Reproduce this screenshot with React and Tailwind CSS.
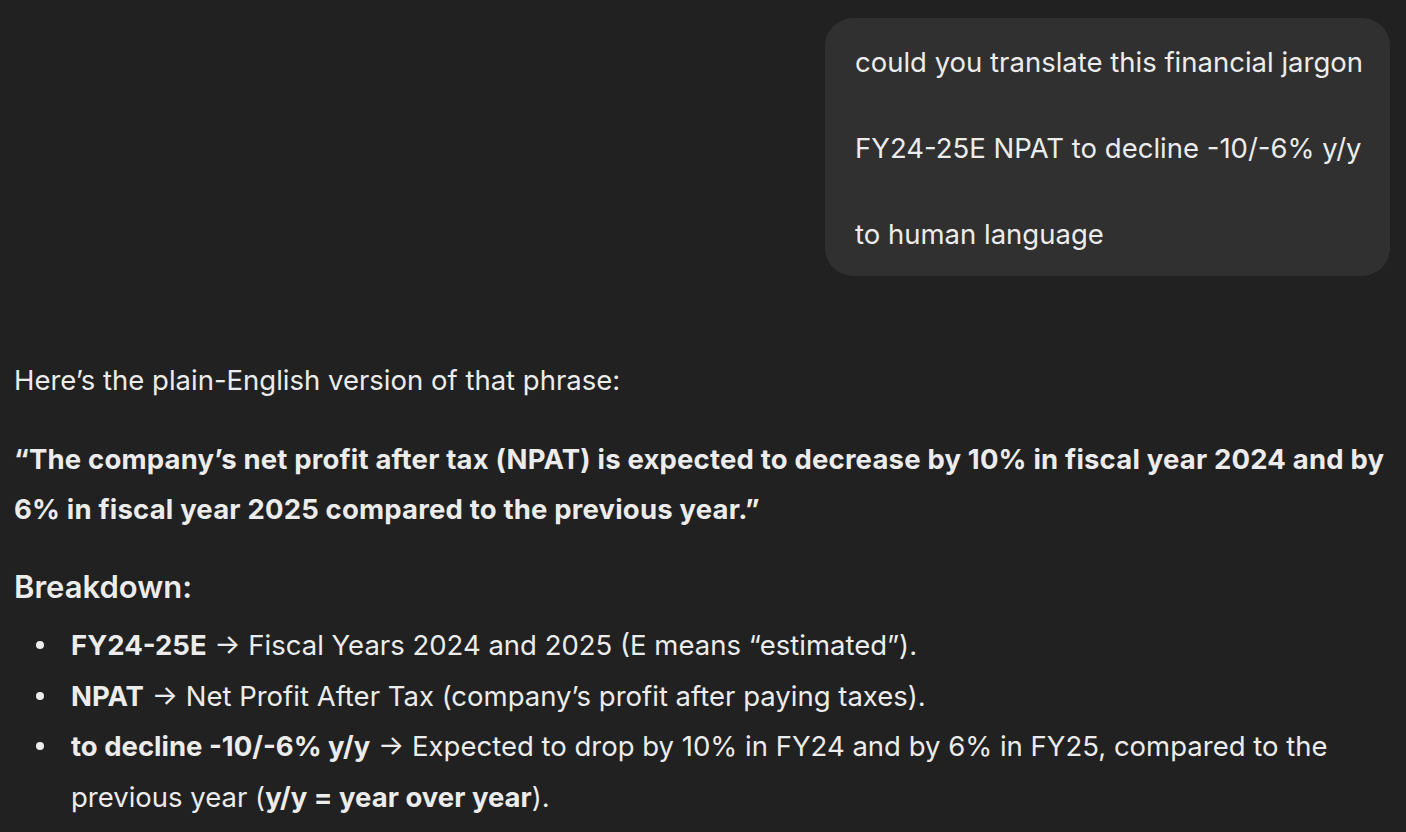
import React from "react";

function Bullet({ children }) {
  return (
    <div className="flex">
      <div className="w-[57px] shrink-0 flex h-[50.5px] items-center">
        <span className="ml-[22px] w-[8px] h-[8px] rounded-full bg-[#ececec]" />
      </div>
      <div className="flex-1 min-w-0">{children}</div>
    </div>
  );
}

export default function App() {
  return (
    <div
      className="w-full h-[832px] overflow-hidden bg-[#212121] text-[#ececec] text-[27.5px]"
      style={{ fontFamily: "Inter, 'Noto Sans', sans-serif" }}
    >
      <div className="flex justify-end pr-4 pt-[18px]">
        <div className="bg-[#303030] rounded-[28px] pl-[30px] pr-[27px] pt-[23px] pb-[20px] leading-[43px]">
          <div>could you translate this financial jargon</div>
          <div className="h-[43px]" />
          <div>FY24-25E NPAT to decline -10/-6% y/y</div>
          <div className="h-[43px]" />
          <div>to human language</div>
        </div>
      </div>

      <div className="px-[14px]">
        <p className="mt-[79px] leading-[50px]">Here’s the plain-English version of that phrase:</p>
        <p className="mt-[29px] leading-[50px] font-bold tracking-[0.18px]">
          “The company’s net profit after tax (NPAT) is expected to decrease by 10% in fiscal year 2024 and by 6% in fiscal year 2025 compared to the previous year.”
        </p>
        <h3 className="mt-[33px] text-[31px] leading-[40px] font-semibold">Breakdown:</h3>
        <div className="mt-[13px] leading-[50.5px]">
          <Bullet>
            <b className="font-bold">FY24-25E</b> → Fiscal Years 2024 and 2025 (E means “estimated”).
          </Bullet>
          <Bullet>
            <b className="font-bold">NPAT</b> → Net Profit After Tax (company’s profit after paying taxes).
          </Bullet>
          <Bullet>
            <b className="font-bold">to decline -10/-6% y/y</b> → Expected to drop by 10% in FY24 and by 6% in FY25, compared to the previous year (<b className="font-bold">y/y = year over year</b>).
          </Bullet>
        </div>
      </div>
    </div>
  );
}
